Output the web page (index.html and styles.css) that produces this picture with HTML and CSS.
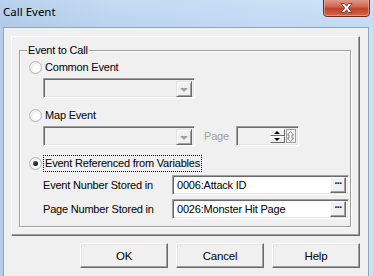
FILE: index.html
```html
<!DOCTYPE html>
<html>
<head>
<meta charset="utf-8">
<link rel="stylesheet" href="styles.css">
</head>
<body>
<div class="window">
  <div class="titlebar">
    <span class="title">Call Event</span>
    <div class="close">
      <svg width="47" height="17" viewBox="0 0 47 17">
        <defs>
          <linearGradient id="cg" x1="0" y1="0" x2="0" y2="1">
            <stop offset="0" stop-color="#e2a090"/>
            <stop offset="0.45" stop-color="#d0634f"/>
            <stop offset="0.55" stop-color="#c0412a"/>
            <stop offset="1" stop-color="#d46a45"/>
          </linearGradient>
        </defs>
        <path d="M0.5 -1 V13 Q0.5 16.5 4 16.5 H43 Q46.5 16.5 46.5 13 V-1" fill="url(#cg)" stroke="#6e2a22"/>
        <path d="M1.5 -1 V13 Q1.5 15.5 4 15.5 H43 Q45.5 15.5 45.5 13 V-1" fill="none" stroke="#eeb7a8" stroke-opacity="0.6"/>
        <path d="M18 3.5 L21.5 3.5 L23.5 6.2 L25.5 3.5 L29 3.5 L25.3 8 L29 12.5 L25.5 12.5 L23.5 9.8 L21.5 12.5 L18 12.5 L21.7 8 Z" fill="#ffffff" stroke="#5a2a24" stroke-width="0.8"/>
      </svg>
    </div>
  </div>
  <div class="client">
    <div class="panel">
      <div class="group">
        <span class="legend">Event to Call</span>
        <div class="radio-row">
          <span class="radio"></span><span class="rlabel">Common Event</span>
        </div>
        <div class="combo disabled">
          <span class="drop"><span class="arrow"></span></span>
        </div>
        <div class="radio-row gap-lg">
          <span class="radio"></span><span class="rlabel">Map Event</span>
        </div>
        <div class="map-row">
          <div class="combo disabled">
            <span class="drop"><span class="arrow"></span></span>
          </div>
          <span class="page-label">Page</span>
          <div class="spin">
            <span class="spin-field"></span>
            <span class="spin-btns">
              <span class="sbtn"><span class="up"></span></span>
              <span class="sbtn"><span class="down"></span></span>
            </span>
            <span class="spin-extra">
              <svg width="7" height="11" viewBox="0 0 7 11"><path d="M3.5 0.5 L6.5 4 L5 4 L5 7 L6.5 7 L3.5 10.5 L0.5 7 L2 7 L2 4 L0.5 4 Z" fill="#fff" stroke="#6d6d6d" stroke-width="0.8"/></svg>
            </span>
          </div>
        </div>
        <div class="radio-row focus-row">
          <span class="radio checked"></span><span class="rlabel focus">Event Referenced from Variables</span>
        </div>
        <div class="var-row first">
          <span class="var-label">Event Nunber Stored in</span>
          <div class="field"><span class="ftext">0006:Attack ID</span><span class="ell">&middot;&middot;&middot;</span></div>
        </div>
        <div class="var-row">
          <span class="var-label">Page Number Stored in</span>
          <div class="field"><span class="ftext">0026:Monster Hit Page</span><span class="ell">&middot;&middot;&middot;</span></div>
        </div>
      </div>
    </div>
    <div class="buttons">
      <span class="btn">OK</span>
      <span class="btn">Cancel</span>
      <span class="btn">Help</span>
    </div>
  </div>
</div>
</body>
</html>
```

FILE: styles.css
```css
* { box-sizing: border-box; }

html, body {
  margin: 0;
  padding: 0;
}

body {
  width: 373px;
  height: 276px;
  overflow: hidden;
  font-family: "Liberation Sans", Arial, sans-serif;
  font-size: 11px;
  letter-spacing: -0.2px;
  color: #000;
}

.window {
  width: 373px;
  height: 276px;
  display: flex;
  flex-direction: column;
  background: linear-gradient(to right, #b3cdea 0%, #bfd8f1 30%, #c6ddf5 70%, #c9e0f6 100%);
}

.titlebar {
  height: 27px;
  flex: none;
  display: flex;
  align-items: flex-start;
  padding-left: 3px;
  background: linear-gradient(to bottom, rgba(255,255,255,0.08), rgba(160,190,225,0.15));
}

.title {
  font-family: "Noto Sans", "Open Sans", sans-serif;
  font-size: 11.5px;
  letter-spacing: 0;
  line-height: 24px;
  color: #000;
}

.close {
  margin-left: auto;
  margin-right: 3px;
  width: 47px;
  height: 17px;
}
.close svg { display: block; }

.client {
  flex: 1;
  margin: 0 4px 0 3px;
  border: 1px solid #8ea4bf;
  border-bottom: none;
  background: #f0f0f0;
  padding: 8px 0 0 7px;
}

.panel {
  width: 349px;
  height: 200px;
  border-top: 1px solid #fff;
  border-left: 1px solid #fff;
  border-right: 1px solid #696969;
  border-bottom: 1px solid #696969;
  box-shadow: inset -1px -1px 0 #a0a0a0;
  padding: 13px 0 0 7px;
}

.group {
  position: relative;
  width: 332px;
  height: 177px;
  border: 1px solid #a0a0a0;
  box-shadow: inset 1px 1px 0 #fff, 1px 1px 0 #fff;
  padding: 10px 0 0 9px;
}

.legend {
  position: absolute;
  left: 7px;
  top: -8px;
  padding: 0 1px;
  line-height: 14px;
  background: #f0f0f0;
}

.radio-row {
  display: flex;
  align-items: center;
  height: 13px;
}
.radio-row.gap-lg { margin-top: 11px; }

.radio {
  width: 13px;
  height: 13px;
  border-radius: 50%;
  border: 1px solid #b4b4b4;
  background: radial-gradient(circle at 60% 60%, #ffffff 30%, #e4e4e4 75%, #d0d0d0 100%);
  box-shadow: inset 0 0 0 1px #f4f4f4;
  position: relative;
  flex: none;
}
.radio.checked::after {
  content: "";
  position: absolute;
  left: 3px;
  top: 3px;
  width: 5px;
  height: 5px;
  border-radius: 50%;
  background: radial-gradient(circle at 40% 40%, #555 0%, #111 70%);
}

.rlabel {
  margin-left: 3px;
  line-height: 13px;
}

.focus-row {
  height: 17px;
  margin-top: 9px;
}
.rlabel.focus {
  margin-left: 1px;
  padding: 1px 1px;
  line-height: 13px;
  border: 1px dotted #000;
}

.combo {
  width: 152px;
  height: 20px;
  margin: 4px 0 0 14px;
  border-top: 1px solid #a0a0a0;
  border-left: 1px solid #a0a0a0;
  border-right: 1px solid #fff;
  border-bottom: 1px solid #fff;
  box-shadow: inset 1px 1px 0 #696969, inset -1px -1px 0 #e3e3e3;
  background: #f0f0f0;
  display: flex;
  justify-content: flex-end;
  padding: 2px;
}

.drop {
  width: 16px;
  height: 16px;
  border-top: 1px solid #e3e3e3;
  border-left: 1px solid #e3e3e3;
  border-right: 1px solid #696969;
  border-bottom: 1px solid #696969;
  box-shadow: inset 1px 1px 0 #fff, inset -1px -1px 0 #a0a0a0;
  background: #f0f0f0;
  display: flex;
  align-items: center;
  justify-content: center;
}
.arrow {
  width: 0;
  height: 0;
  border-left: 4px solid transparent;
  border-right: 4px solid transparent;
  border-top: 4px solid #a0a0a0;
  margin-top: 1px;
}

.map-row {
  display: flex;
  align-items: center;
  margin-top: 4px;
  height: 20px;
}
.map-row .combo { margin-top: 0; }

.page-label {
  margin-left: 9px;
  color: #a0a0a0;
}

.spin {
  margin-left: 7px;
  width: 63px;
  height: 20px;
  border-top: 1px solid #a0a0a0;
  border-left: 1px solid #a0a0a0;
  border-right: 1px solid #fff;
  border-bottom: 1px solid #fff;
  box-shadow: inset 1px 1px 0 #696969, inset -1px -1px 0 #e3e3e3;
  background: #f0f0f0;
  display: flex;
  padding: 2px 2px 2px 2px;
}
.spin-field { flex: 1; }
.spin-btns {
  width: 15px;
  display: flex;
  flex-direction: column;
}
.sbtn {
  flex: 1;
  border-top: 1px solid #fff;
  border-left: 1px solid #fff;
  border-right: 1px solid #696969;
  border-bottom: 1px solid #696969;
  background: #f0f0f0;
  display: flex;
  align-items: center;
  justify-content: center;
}
.up {
  width: 0; height: 0;
  border-left: 3px solid transparent;
  border-right: 3px solid transparent;
  border-bottom: 3px solid #000;
}
.down {
  width: 0; height: 0;
  border-left: 3px solid transparent;
  border-right: 3px solid transparent;
  border-top: 3px solid #000;
}
.spin-extra {
  width: 10px;
  margin-left: 1px;
  border: 1px solid #a0a0a0;
  background: #f0f0f0;
  display: flex;
  align-items: center;
  justify-content: center;
}
.spin-extra svg { display: block; }

.var-row {
  display: flex;
  align-items: center;
  height: 20px;
  margin-top: 4px;
  padding-left: 14px;
}
.var-row.first { margin-top: 3px; }

.var-label {
  width: 129px;
}

.field {
  width: 177px;
  height: 20px;
  border-top: 1px solid #a0a0a0;
  border-left: 1px solid #a0a0a0;
  border-right: 1px solid #fff;
  border-bottom: 1px solid #fff;
  box-shadow: inset 1px 1px 0 #696969, inset -1px -1px 0 #e3e3e3;
  background: #fff;
  display: flex;
  align-items: center;
  padding: 2px;
}
.ftext {
  flex: 1;
  padding-left: 2px;
  line-height: 14px;
}
.ell {
  width: 16px;
  height: 16px;
  border-top: 1px solid #fff;
  border-left: 1px solid #fff;
  border-right: 1px solid #696969;
  border-bottom: 1px solid #696969;
  box-shadow: inset -1px -1px 0 #a0a0a0;
  background: #f0f0f0;
  font-weight: bold;
  font-size: 10px;
  line-height: 12px;
  text-align: center;
  letter-spacing: -1px;
}

.buttons {
  width: 349px;
  display: flex;
  justify-content: flex-end;
  gap: 8px;
  margin-top: 7px;
}

.btn {
  width: 88px;
  height: 25px;
  display: flex;
  align-items: center;
  justify-content: center;
  border-top: 1px solid #fff;
  border-left: 1px solid #fff;
  border-right: 1px solid #696969;
  border-bottom: 1px solid #696969;
  box-shadow: inset -1px -1px 0 #a0a0a0, inset 1px 1px 0 #e3e3e3;
  background: #f0f0f0;
  font-size: 11.5px;
}
```
